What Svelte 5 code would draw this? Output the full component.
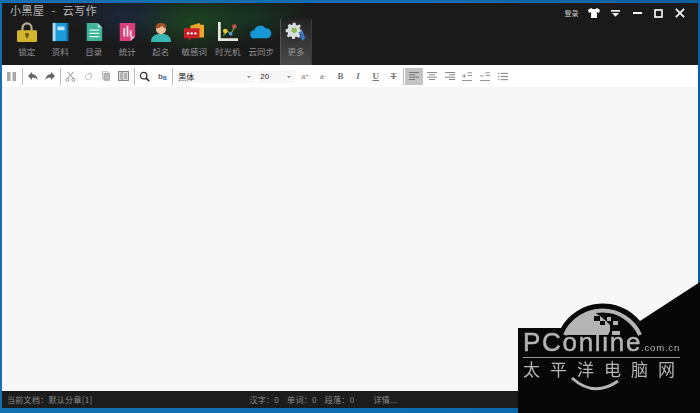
<script>
  const tabs = ['锁定', '资料', '目录', '统计', '起名', '敏感词', '时光机', '云同步', '更多'];
</script>

<div class="window">
  <header class="head">
    <div class="glow"></div>
    <div class="titlebar">
      <span class="title">小黑屋<i>-</i>云写作</span>
      <div class="winctl">
        <span class="login">登录</span>
        <span class="ctl"><svg width="14" height="12" viewBox="0 0 14 12"><path d="M4 1 1 3l1 3 2-1v6h6V5l2 1 1-3-3-2-1.500 1h-3z" fill="#fff"/></svg></span>
        <span class="ctl"><svg width="11" height="9" viewBox="0 0 12 10"><path d="M1 1h10v2H1zM2 4.500h8L6 8.500z" fill="#eee"/></svg></span>
        <span class="ctl"><svg width="9" height="10" viewBox="0 0 9 10"><path d="M0 5h9" stroke="#fff" stroke-width="2"/></svg></span>
        <span class="ctl"><svg width="9" height="9" viewBox="0 0 9 9"><rect x="1" y="1" width="7" height="7" fill="none" stroke="#fff" stroke-width="1.600"/></svg></span>
        <span class="ctl"><svg width="10" height="10" viewBox="0 0 11 11"><path d="M1 1l9 9M10 1l-9 9" stroke="#fff" stroke-width="1.800"/></svg></span>
      </div>
    </div>
    <nav class="tabs">
      {#each tabs as t, i}
        <div class="tab" class:active={i === 8}>
          <svg class="ico" width="22" height="20" viewBox="0 0 24 22">
            {#if i === 0}
              <path d="M7 11V6.500a5 5 0 0 1 10 0V11" fill="none" stroke="#b8ad8c" stroke-width="2.400"/>
              <rect x="1" y="9" width="22" height="13" rx="1.500" fill="#d4b52e"/>
              <circle cx="12" cy="14" r="2.200" fill="#6b5a12"/><path d="M11 15h2v3h-2z" fill="#6b5a12"/>
            {:else if i === 1}
              <rect x="4" y="1" width="17" height="20" fill="#1d9bdc"/>
              <rect x="4" y="1" width="3" height="20" fill="#b9d9e8"/>
              <rect x="19" y="1" width="2" height="20" fill="#0f6fa8"/>
              <rect x="9" y="5" width="8" height="4" rx="1" fill="#bfe6f7"/>
            {:else if i === 2}
              <path d="M4 1h12l5 5v15H4z" fill="#3fb39a"/>
              <path d="M16 1l5 5h-5z" fill="#a8e0d2"/>
              <path d="M7 9h11M7 12.500h11M7 16h11" stroke="#d8f3ec" stroke-width="1.400"/>
            {:else if i === 3}
              <path d="M4 1h17v15l-5 5H4z" fill="#d8407c"/>
              <path d="M16 21v-5h5z" fill="#f2b6cd"/>
              <path d="M8 7h2v9H8zM11.500 4h2v12h-2zM15 9h2v7h-2z" fill="#f7dbe6"/>
            {:else if i === 4}
              <path d="M1 22c0-6 4-9 11-9s11 3 11 9z" fill="#3ab5b2"/>
              <circle cx="12" cy="8" r="5.500" fill="#ecc09a"/>
              <path d="M6 7c0-5 3-6 6-6s6 1 6 6c-3 0-4-2-5-3-1 2-4 3-7 3z" fill="#9a5526"/>
            {:else if i === 5}
              <path d="M8 4l10-3 1 2h4v14H8z" fill="#e9a52c"/>
              <path d="M1 7h17v11H9l-3 3v-3H1z" fill="#c8202a"/>
              <circle cx="5.500" cy="12.500" r="1.300" fill="#fff"/><circle cx="9.500" cy="12.500" r="1.300" fill="#fff"/><circle cx="13.500" cy="12.500" r="1.300" fill="#fff"/>
            {:else if i === 6}
              <path d="M2.500 0v19.500H23" fill="none" stroke="#e8e8e0" stroke-width="3"/>
              <path d="M7 15l4-5 4 3 5-8" fill="none" stroke="#7cb342" stroke-width="1.200"/>
              <circle cx="9" cy="10" r="2.500" fill="#e8c23a"/><circle cx="15" cy="13" r="2" fill="#4fa0d8"/><circle cx="19" cy="5" r="2.500" fill="#c9504a"/>
            {:else if i === 7}
              <path d="M5 18a4.500 4.500 0 0 1-.5-9A7 7 0 0 1 17 7a5.500 5.500 0 0 1 1.500 11z" fill="#1797d6"/>
            {:else}
              <g transform="translate(1 0) scale(.75)">
                <path d="M10 1h4l.5 3 2.500 1 2.500-1.800 2.500 3-2 2 .5 2.800 3 .5v4l-3 .5-1 2.500 1.800 2.500-3 2.500-2-2-2.800.5-.5 3h-4l-.5-3-2.500-1-2.500 1.800-2.500-3 2-2-.5-2.800-3-.5v-4l3-.5 1-2.500L2.500 5 5.500 2.500l2 2 2-.5z" fill="#d9dde0"/>
                <circle cx="12" cy="12" r="4" fill="#8cc152"/>
              </g>
              <path d="M14 11l3 0 0-3 3 3 1 5 2 0-3.500 5-3.500-5 2 0-1-3z" fill="#3a78c8"/>
            {/if}
          </svg>
          <span>{t}</span>
        </div>
      {/each}
    </nav>
  </header>

  <div class="toolbar">
    <span class="slot"><svg width="9" height="9" viewBox="0 0 9 9"><path d="M0 0h3.500v9H0zM5.500 0H9v9H5.500z" fill="#a8a8a8"/></svg></span>
    <i class="sep"></i>
    <span class="slot"><svg width="10" height="8" viewBox="0 0 10 8"><path d="M0 4l4-4v2c3 0 5 2 6 6-2-2-3-2.500-6-2.200V8z" fill="#666"/></svg></span>
    <span class="slot"><svg width="10" height="8" viewBox="0 0 10 8"><path d="M10 4L6 0v2C3 2 1 4 0 8c2-2 3-2.500 6-2.200V8z" fill="#666"/></svg></span>
    <i class="sep"></i>
    <span class="slot"><svg width="11" height="11" viewBox="0 0 13 13"><path d="M3 1l7 8M10 1L3 9" stroke="#aaa" stroke-width="1.200"/><circle cx="3" cy="10.500" r="1.800" fill="none" stroke="#888"/><circle cx="10" cy="10.500" r="1.800" fill="none" stroke="#888"/></svg></span>
    <span class="slot"><svg width="10" height="10" viewBox="0 0 13 13"><rect x="2" y="4" width="7" height="7" rx="2" fill="none" stroke="#bbb"/><path d="M5 4l3-2 3 3-3 3" fill="none" stroke="#bbb"/></svg></span>
    <span class="slot"><svg width="10" height="10" viewBox="0 0 13 13"><rect x="2" y="1" width="7" height="9" fill="none" stroke="#aaa"/><rect x="4" y="3" width="7" height="9" fill="#bbb" stroke="#999"/></svg></span>
    <span class="slot"><svg width="11" height="10" viewBox="0 0 11 10"><rect x=".5" y=".5" width="10" height="9" fill="#ddd" stroke="#888"/><path d="M4 1v8M2 3h1M2 5h1M2 7h1M6 3h3M6 5h3M6 7h3" stroke="#888"/></svg></span>
    <i class="sep"></i>
    <span class="slot"><svg width="11" height="11" viewBox="0 0 13 13"><circle cx="5.500" cy="5.500" r="3.800" fill="none" stroke="#333" stroke-width="1.600"/><path d="M8.500 8.500l3.500 3.500" stroke="#333" stroke-width="2"/></svg></span>
    <span class="slot replace"><b>b</b><em>a</em></span>
    <i class="sep"></i>
    <div class="select font">黑体<span class="caret"></span></div>
    <div class="select size">20<span class="caret"></span></div>
    <span class="slot tx">a<sup>+</sup></span>
    <span class="slot tx">a<sup>-</sup></span>
    <span class="slot tx fmt">B</span>
    <span class="slot tx fmt ital">I</span>
    <span class="slot tx fmt"><u>U</u></span>
    <span class="slot tx fmt"><s>T</s></span>
    <i class="sep"></i>
    <span class="slot on">
      <svg width="10" height="8" viewBox="0 0 10 8"><path d="M0 .5h10M0 2.800h6M0 5.200h10M0 7.500h6" stroke="#777"/></svg>
    </span>
    <span class="slot">
      <svg width="10" height="8" viewBox="0 0 10 8"><path d="M0 .5h10M2 2.800h6M0 5.200h10M2 7.500h6" stroke="#888"/></svg>
    </span>
    <span class="slot">
      <svg width="10" height="8" viewBox="0 0 10 8"><path d="M0 .5h10M4 2.800h6M0 5.200h10M4 7.500h6" stroke="#888"/></svg>
    </span>
    <span class="slot">
      <svg width="10" height="10" viewBox="0 0 11 11"><path d="M0 10.500h11M6 2h5M6 5h5M0 5.500h4M2.500 3.500v4" stroke="#888"/></svg>
    </span>
    <span class="slot">
      <svg width="10" height="10" viewBox="0 0 11 11"><path d="M0 10.500h11M6 2h5M6 5h5M0 5.500h4" stroke="#888"/></svg>
    </span>
    <span class="slot">
      <svg width="10" height="9" viewBox="0 0 11 10"><path d="M3 1.500h8M3 5h8M3 8.500h8M0 1.500h1.500M0 5h1.500M0 8.500h1.500" stroke="#777"/></svg>
    </span>
  </div>

  <main class="editor"></main>

  <footer class="status">
    <span class="doc">当前文档：默认分章[1]</span>
    <div class="counts">
      <span>汉字：0</span>
      <span>单词：0</span>
      <span>段落：0</span>
      <span class="more">详情...</span>
    </div>
  </footer>
</div>

<!-- watermark sits over the window -->
<div class="mark">
  <svg class="mark-bg" width="182" height="132" viewBox="0 0 182 132">
    <path d="M0 47H43A48 48 0 0 1 122 40L182 1V132H0z" fill="#070707"/>
    <path d="M47 54A41 41 0 0 1 122 54" fill="none" stroke="#b4b4b4" stroke-width="4"/>
    <path d="M48 54A40 40 0 0 1 76 31L82 35L87 39L92 44V50L90 54z" fill="#b4b4b4"/>
    <path d="M76 35h6v5h-6zM82 40h5v4h-5z" fill="#070707"/>
    <path d="M89 36h4v4h-4zM95 40h5v4h-5zM94 50h8v4h-8z" fill="#b4b4b4"/>
    <path d="M54 97q22 20 46 3" fill="none" stroke="#b4b4b4" stroke-width="3"/>
  </svg>
  <div class="mark-brand"><span class="pc">PConline</span><span class="dom">.com.cn</span></div>
  <div class="mark-line"></div>
  <div class="mark-cn">太平洋电脑网</div>
</div>

<style>
  :global(body) {
    margin: 0;
    width: 700px;
    height: 413px;
    overflow: hidden;
    background: #0d6fb4;
    font-family: "Noto Sans CJK SC", "Liberation Sans", sans-serif;
  }

  .window {
    width: 700px;
    height: 413px;
    box-sizing: border-box;
    padding: 3px 2px 5px;
    display: flex;
    flex-direction: column;
    background: linear-gradient(90deg, #1470b0 0%, #0d6cb0 60%, #0a5f9e 100%);
  }

  .head {
    position: relative;
    height: 62px;
    background: #1a1a1a;
    flex-shrink: 0;
    overflow: hidden;
  }

  .glow {
    position: absolute;
    inset: 0;
    background:
      radial-gradient(ellipse 60px 34px at 190px 18px, rgba(30,110,40,0.5), transparent),
      radial-gradient(ellipse 60px 30px at 125px 12px, rgba(30,60,110,0.4), transparent),
      radial-gradient(ellipse 60px 28px at 250px 14px, rgba(20,90,50,0.4), transparent);
  }

  .titlebar {
    position: relative;
    display: flex;
    justify-content: space-between;
    height: 16px;
    padding-left: 8px;
  }

  .title {
    color: #b8b8b8;
    font-size: 11px;
    line-height: 15px;
    letter-spacing: 0.5px;
  }

  .title i {
    font-style: normal;
    margin: 0 7px;
  }

  .winctl {
    display: flex;
    align-items: center;
    padding: 4px 7px 0 0;
  }

  .login {
    color: #ccc;
    font-size: 7px;
    margin-right: 5px;
  }

  .ctl {
    width: 21.500px;
    display: flex;
    justify-content: center;
  }

  .tabs {
    position: relative;
    display: flex;
    padding-left: 8px;
  }

  .tab {
    width: 33.500px;
    height: 46px;
    display: flex;
    flex-direction: column;
    align-items: center;
    box-sizing: border-box;
    padding-top: 3px;
    gap: 3px;
    color: #929292;
    font-size: 8.500px;
    line-height: 12px;
    white-space: nowrap;
  }

  .tab.active {
    width: 32px;
    border-left: 1px solid #555;
    border-right: 1px solid #3c3c3c;
    background: linear-gradient(180deg, #222, #4a4a4a);
    margin-left: 2px;
  }

  .toolbar {
    height: 22px;
    flex-shrink: 0;
    background: #fff;
    display: flex;
    align-items: center;
    padding-left: 1px;
  }

  .slot {
    width: 17.700px;
    height: 17px;
    flex-shrink: 0;
    display: flex;
    align-items: center;
    justify-content: center;
  }

  .slot.on {
    background: #c4c4c4;
  }

  .sep {
    width: 1px;
    height: 17px;
    margin: 0 1px;
    background: #bbb;
    flex-shrink: 0;
  }

  .replace {
    font: 700 8px "Liberation Sans", sans-serif;
    color: #666;
  }

  .replace em {
    font-style: normal;
    font-size: 7px;
    padding-top: 3px;
    color: #3b7cc4;
  }

  .select {
    position: relative;
    height: 13px;
    line-height: 13px;
    font-size: 8px;
    color: #222;
    padding-left: 2px;
    margin-left: 2px;
    background: #f7f7f7;
    box-sizing: border-box;
    flex-shrink: 0;
  }

  .font { width: 79px; }
  .size { width: 37px; font-family: "Liberation Sans", sans-serif; margin-left: 3px; margin-right: 1px; }

  .caret {
    position: absolute;
    right: 4px;
    top: 6px;
    border: 2.500px solid transparent;
    border-top: 2.500px solid #888;
    border-bottom: 0;
  }

  .tx {
    font-family: "Liberation Serif", serif;
    color: #777;
    font-size: 9px;
  }

  .tx sup { font-size: 6px; line-height: 0; }
  .fmt { font-weight: 700; }
  .ital { font-style: italic; }

  .editor {
    flex: 1;
    background: #f7f7f7;
  }

  .status {
    height: 17px;
    flex-shrink: 0;
    background: #1c1c1c;
    color: #8c8c8c;
    font-size: 8px;
    display: flex;
    align-items: center;
    padding-left: 5px;
    letter-spacing: 0.3px;
  }

  .counts {
    display: flex;
    gap: 8px;
    margin-left: 157px;
  }

  .more {
    margin-left: 11px;
  }

  .mark {
    position: fixed;
    right: 0;
    bottom: 0;
    width: 182px;
    height: 132px;
  }

  .mark-bg {
    position: absolute;
    inset: 0;
  }

  .mark-brand {
    position: absolute;
    left: 5px;
    top: 51px;
    color: #b4b4b4;
    white-space: nowrap;
    font-family: "Liberation Sans", sans-serif;
    display: flex;
    align-items: baseline;
  }

  .pc {
    font-size: 26px;
    letter-spacing: 1.700px;
    line-height: 20px;
    -webkit-text-stroke: 0.5px #b4b4b4;
  }

  .dom {
    font-size: 9.500px;
    line-height: 12px;
    letter-spacing: 0.8px;
    margin-left: -1px;
  }

  .mark-line {
    position: absolute;
    left: 5px;
    top: 76px;
    width: 157px;
    height: 1px;
    background: #999;
  }

  .mark-cn {
    position: absolute;
    left: 5px;
    top: 79px;
    color: #b4b4b4;
    font-size: 17px;
    line-height: 18px;
    letter-spacing: 10px;
    white-space: nowrap;
  }
</style>
